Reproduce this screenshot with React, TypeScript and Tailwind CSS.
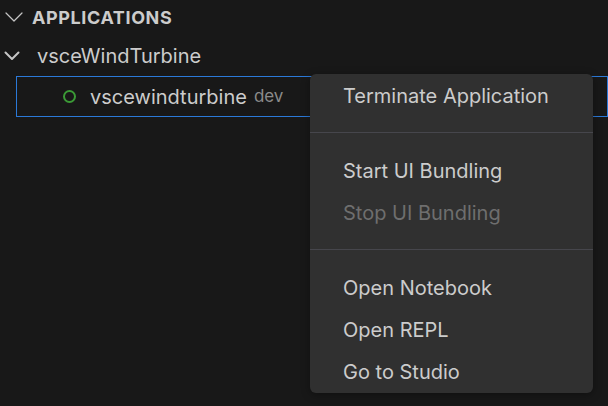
import { useState } from "react";

const font = { fontFamily: "Inter, 'Noto Sans', sans-serif" };

type MenuEntry = { label: string; disabled?: boolean } | "sep";

const menu: MenuEntry[] = [
  { label: "Terminate Application" },
  "sep",
  { label: "Start UI Bundling" },
  { label: "Stop UI Bundling", disabled: true },
  "sep",
  { label: "Open Notebook" },
  { label: "Open REPL" },
  { label: "Go to Studio" },
];

// thin twistie for the view header, bolder one for tree nodes
function Chevron({ thin }: { thin?: boolean }) {
  return thin ? (
    <svg width="20" height="20" viewBox="0 0 20 20" fill="none">
      <path d="M2 6l8 8 8-8" stroke="#c5c5c5" strokeWidth={1.2} strokeLinecap="round" strokeLinejoin="round" />
    </svg>
  ) : (
    <svg width="16" height="16" viewBox="0 0 16 16" fill="none">
      <path d="M1.5 4.5l6.5 6.5 6.5-6.5" stroke="#c5c5c5" strokeWidth={2} strokeLinecap="round" strokeLinejoin="round" />
    </svg>
  );
}

export default function App() {
  const [hover, setHover] = useState<number | null>(null);

  return (
    <div
      className="relative w-[608px] h-[406px] overflow-hidden bg-[#181818] text-[#cccccc]"
      style={font}
    >
      {/* section header */}
      <div className="flex items-center h-[34px] pl-[4px] gap-[8px]">
        <Chevron thin />
        <span className="text-[18px] font-bold tracking-[0.6px] text-[#cccccc]">
          APPLICATIONS
        </span>
      </div>

      {/* tree */}
      <div className="flex items-center h-[42px] pt-[2px] pl-[4px] gap-[17px]">
        <Chevron />
        <span className="text-[20px]">vsceWindTurbine</span>
      </div>
      <div className="flex items-center h-[41px] ml-[16px] border border-[#2b79d8] pl-[46px]">
        <span className="w-[13px] h-[13px] rounded-full border-2 border-[#3b9a36]" />
        <span className="ml-[14px] text-[20px]">vscewindturbine</span>
        <span className="ml-[7px] text-[17px] text-[#8b8b8b]">dev</span>
      </div>

      {/* context menu */}
      <div className="absolute left-[310px] top-[74px] w-[283px] h-[319px] rounded-[6px] bg-[#303030] shadow-[0_2px_8px_rgba(0,0,0,0.35)]">
        {menu.map((m, i) =>
          m === "sep" ? (
            <div key={i} className="py-[16px]">
              <div className="h-px bg-[#46464c]" />
            </div>
          ) : (
            <div
              key={i}
              onMouseEnter={() => setHover(i)}
              onMouseLeave={() => setHover(null)}
              className={`flex items-center h-[42px] pt-[2px] pl-[33px] text-[20px] ${
                m.disabled ? "text-[#6e6e6e]" : "text-[#cccccc]"
              } ${hover === i && !m.disabled ? "bg-[#04395e]" : ""}`}
            >
              {m.label}
            </div>
          )
        )}
      </div>
    </div>
  );
}
